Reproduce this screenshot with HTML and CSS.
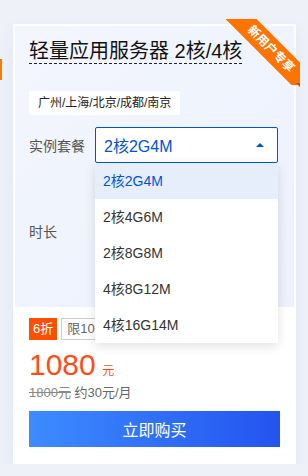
FILE: index.html
```html
<!DOCTYPE html>
<html lang="zh-CN">
<head>
    <meta charset="UTF-8">
    <meta name="viewport" content="width=device-width, initial-scale=1.0">
    <title>轻量应用服务器</title>
    <link rel="stylesheet" href="styles.css">
</head>
<body>
<div class="page">
    <div class="peek"></div>

    <div class="card">
        <div class="ribbon-wrap">
            <div class="ribbon">新用户专享</div>
        </div>
        <i class="ribbon-fold"></i>

        <div class="card-top">
            <h2 class="title"><span>轻量应用服务器 2核/4核</span></h2>
            <div class="region">广州/上海/北京/成都/南京</div>

            <div class="form-row">
                <label class="form-label">实例套餐</label>
                <div class="select">
                    <span>2核2G4M</span>
                    <i class="caret"></i>
                </div>
            </div>

            <div class="form-row row-time">
                <label class="form-label">时长</label>
            </div>
        </div>

        <div class="card-bottom">
            <div class="tags">
                <span class="tag-discount">6折</span>
                <span class="tag-limit">限10个</span>
            </div>
            <div class="price">
                <span class="price-num">1080</span>
                <span class="price-unit">元</span>
            </div>
            <div class="price-sub">
                <s>1800元</s> 约30元/月
            </div>
            <button type="button" class="buy-btn">立即购买</button>
        </div>

        <ul class="dropdown">
            <li class="active">2核2G4M</li>
            <li>2核4G6M</li>
            <li>2核8G8M</li>
            <li>4核8G12M</li>
            <li>4核16G14M</li>
        </ul>
    </div>
</div>
</body>
</html>
```

FILE: styles.css
```css
body {
    margin: 0;
    padding: 0;
    background-color: #eef1f8;
    font-family: "Liberation Sans", "Noto Sans CJK SC", sans-serif;
    color: #333;
}

.page {
    display: flex;
    align-items: flex-start;
    padding-top: 24px;
}

.peek {
    width: 2px;
    height: 21px;
    margin-top: 35px;
    margin-right: 11px;
    background-color: #ff7a00;
}

.card {
    position: relative;
    width: 283px;
    height: 440px;
    box-sizing: border-box;
    border: 2px solid #fff;
    background-color: #fff;
    box-shadow: 0 6px 16px rgba(80, 100, 160, 0.08);
}

.card-top {
    height: 281px;
    padding: 13px 14px 0;
    box-sizing: border-box;
    background: linear-gradient(135deg, #f4f6fd 0%, #eef3fd 60%, #ecf1fc 100%);
}

.title {
    margin: 0;
    font-size: 20px;
    font-weight: normal;
    color: #111;
}

.title span {
    display: inline-block;
    line-height: 24px;
    border-bottom: 1px dashed #222;
}

.region {
    display: inline-block;
    margin-top: 27px;
    padding: 0 9px;
    height: 24px;
    line-height: 24px;
    font-size: 12px;
    color: #222;
    background-color: #fff;
    border-radius: 2px;
}

.form-row {
    display: flex;
    align-items: center;
    height: 36px;
    margin-top: 12px;
}

.row-time {
    margin-top: 50px;
}

.form-label {
    width: 66px;
    font-size: 14px;
    color: #555;
}

.select {
    position: relative;
    display: flex;
    align-items: center;
    width: 183px;
    height: 36px;
    box-sizing: border-box;
    padding-left: 8px;
    border: 1px solid #0052d9;
    border-radius: 2px;
    background-color: #fff;
    font-size: 16px;
    color: #0052d9;
}

.caret {
    position: absolute;
    right: 13px;
    top: 15px;
    width: 0;
    height: 0;
    border-left: 4px solid transparent;
    border-right: 4px solid transparent;
    border-bottom: 4px solid #0052d9;
}

.card-bottom {
    padding: 11px 14px 0;
}

.tags {
    display: flex;
    gap: 4px;
    height: 22px;
}

.tag-discount {
    padding: 0 4px;
    line-height: 22px;
    font-size: 13px;
    color: #fff;
    background-color: #ff4f00;
}

.tag-limit {
    padding: 0 5px;
    line-height: 20px;
    font-size: 13px;
    color: #666;
    border: 1px solid #ccc;
}

.price {
    margin-top: 7px;
    height: 36px;
    color: #ff4d1a;
}

.price-num {
    font-size: 30px;
    line-height: 36px;
}

.price-unit {
    font-size: 12px;
    margin-left: 2px;
}

.price-sub {
    margin-top: 1px;
    font-size: 13px;
    line-height: 18px;
    color: #666;
}

.price-sub s {
    color: #888;
}

.buy-btn {
    display: block;
    width: 100%;
    height: 36px;
    margin-top: 9px;
    border: none;
    font-family: inherit;
    font-size: 16px;
    color: #fff;
    background: linear-gradient(90deg, #3d8cff 0%, #2354ef 100%);
    cursor: pointer;
}

.dropdown {
    position: absolute;
    left: 80px;
    top: 137px;
    width: 183px;
    margin: 0;
    padding: 0;
    list-style: none;
    background-color: #fff;
    box-shadow: 0 3px 10px rgba(0, 0, 0, 0.12);
    z-index: 2;
}

.dropdown li {
    height: 36px;
    line-height: 36px;
    padding-left: 8px;
    font-size: 14px;
    color: #333;
}

.dropdown li.active {
    color: #0052d9;
    background-color: #e6eefc;
}

.ribbon-wrap {
    position: absolute;
    top: -7px;
    right: -6px;
    width: 74px;
    height: 66px;
    overflow: hidden;
    z-index: 3;
}

.ribbon {
    position: absolute;
    left: -10px;
    top: 19px;
    width: 110px;
    height: 22px;
    line-height: 22px;
    text-align: center;
    font-size: 12px;
    font-weight: bold;
    color: #fff;
    background-color: #ff7300;
    transform: rotate(45deg);
}

.ribbon-fold {
    position: absolute;
    top: 57px;
    right: -6px;
    width: 0;
    height: 0;
    border-top: 4px solid #c05000;
    border-left: 4px solid transparent;
    z-index: 3;
}
```
